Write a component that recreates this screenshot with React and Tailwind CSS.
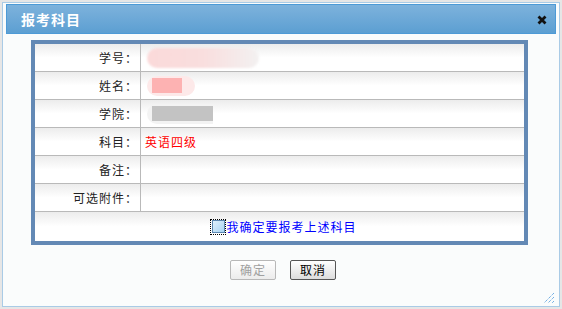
import React from 'react'

const font = { fontFamily: '"Noto Sans CJK SC", "Noto Sans", sans-serif' }

function Row({ label, children }) {
  return (
    <div className="flex h-[28px] border-b border-[#b9b9b9] bg-gradient-to-b from-[#ececec] via-white to-white">
      <div className="flex w-[106px] shrink-0 items-center justify-end border-r border-[#b9b9b9] pr-[2px] text-[12px] tracking-[1px] text-[#222]">
        {label}：
      </div>
      <div className="relative flex flex-1 items-center pl-[4px] text-[12px] tracking-[1px]">{children}</div>
    </div>
  )
}

export default function App() {
  return (
    <div className="h-[309px] w-[562px] bg-[#e6e6e6] p-[2px]" style={font}>
      <div className="flex h-[305px] flex-col border border-[#a9cbe6] bg-[#fafcfc] px-[3px] pt-[1px]">
        <div className="flex h-[30px] items-center justify-between border border-[#4d9ad6] bg-gradient-to-b from-[#7db2dc] to-[#5c9fd2] pl-[14px] pr-[8px]">
          <span className="text-[14px] font-bold tracking-[1px] text-white">报考科目</span>
          <svg width="10" height="10" viewBox="0 0 10 10" className="mt-[2px]">
            <path d="M1.5 1.5L8.5 8.5M8.5 1.5L1.5 8.5" stroke="#111" strokeWidth="2.8" />
          </svg>
        </div>
        <div className="ml-[25px] mt-[6px] w-[497px] border-[4px] border-[#6389b5] bg-white">
          <Row label="学号">
            <div className="ml-[2px] h-[20px] w-[112px] rounded-full bg-gradient-to-r from-[#fbdada] via-[#f9dede] to-[#f3f1f1] blur-[1px]" />
          </Row>
          <Row label="姓名">
            <div className="ml-[2px] flex h-[20px] w-[48px] items-center rounded-full bg-[#fde9e9] pl-[5px] blur-[0.5px]">
              <div className="h-[15px] w-[30px] bg-[#fdb2b2]" />
            </div>
          </Row>
          <Row label="学院">
            <div className="ml-[2px] flex h-[20px] w-[66px] items-center rounded-l-full bg-[#f3f3f3] pl-[5px]">
              <div className="h-[15px] w-[62px] bg-[#c3c3c3]" />
            </div>
          </Row>
          <Row label="科目">
            <span className="text-[#ff0000]">英语四级</span>
          </Row>
          <Row label="备注" />
          <Row label="可选附件" />
          <div className="flex h-[29px] items-center justify-center bg-gradient-to-b from-[#ececec] via-white to-white pl-[8px]">
            <span className="flex h-[16px] w-[16px] items-center justify-center border border-dotted border-black">
              <span className="h-[13px] w-[13px] border border-[#5b87b0] bg-gradient-to-br from-[#dff0fc] to-[#a8d3f2]" />
            </span>
            <span className="text-[12px] tracking-[1px] text-[#0000ff]">我确定要报考上述科目</span>
          </div>
        </div>
        <div className="mt-[15px] flex justify-center gap-[14px] pl-[4px]">
          <button className="h-[20px] w-[46px] rounded-[2px] border border-[#b8b8b8] bg-gradient-to-b from-white to-[#ececec] text-[12px] tracking-[1px] text-[#a0a0a0]">
            确定
          </button>
          <button className="h-[20px] w-[46px] rounded-[2px] border border-[#555] bg-gradient-to-b from-white to-[#dcdcdc] text-[12px] tracking-[1px] text-black">
            取消
          </button>
        </div>
        <div className="mt-auto flex justify-end pb-[2px] pr-[1px]">
          <svg width="12" height="12" viewBox="0 0 12 12">
            <path d="M11 1L1 11M11 5L5 11M11 9L9 11" stroke="#3b8fd9" strokeWidth="1" strokeDasharray="1 1" />
          </svg>
        </div>
      </div>
    </div>
  )
}
